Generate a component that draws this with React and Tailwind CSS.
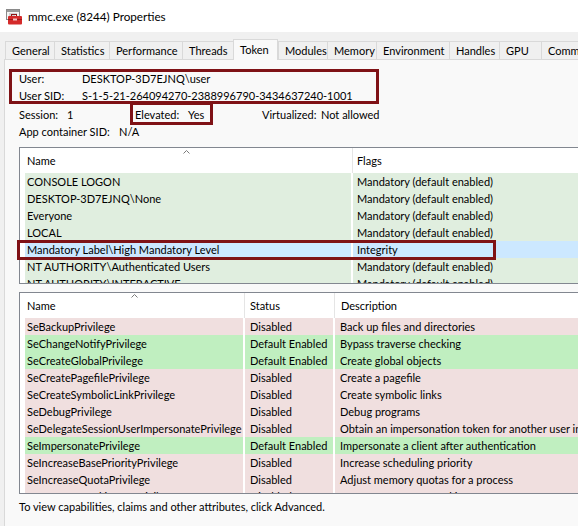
import React from "react";

const FONT = { fontFamily: "Lato, 'Liberation Sans', sans-serif" };

const tabs = [
  ["General", 49],
  ["Statistics", 55],
  ["Performance", 73],
  ["Threads", 51],
  ["Token", 44],
  ["Modules", 49],
  ["Memory", 49],
  ["Environment", 73],
  ["Handles", 50],
  ["GPU", 42],
  ["Comments", 70],
];

const groups = [
  ["CONSOLE LOGON", "Mandatory (default enabled)"],
  ["DESKTOP-3D7EJNQ\\None", "Mandatory (default enabled)"],
  ["Everyone", "Mandatory (default enabled)"],
  ["LOCAL", "Mandatory (default enabled)"],
  ["Mandatory Label\\High Mandatory Level", "Integrity", true],
  ["NT AUTHORITY\\Authenticated Users", "Mandatory (default enabled)"],
  ["NT AUTHORITY\\INTERACTIVE", "Mandatory (default enabled)"],
];

const privs = [
  ["SeBackupPrivilege", "Disabled", "Back up files and directories"],
  ["SeChangeNotifyPrivilege", "Default Enabled", "Bypass traverse checking"],
  ["SeCreateGlobalPrivilege", "Default Enabled", "Create global objects"],
  ["SeCreatePagefilePrivilege", "Disabled", "Create a pagefile"],
  ["SeCreateSymbolicLinkPrivilege", "Disabled", "Create symbolic links"],
  ["SeDebugPrivilege", "Disabled", "Debug programs"],
  ["SeDelegateSessionUserImpersonatePrivilege", "Disabled", "Obtain an impersonation token for another user in the same session"],
  ["SeImpersonatePrivilege", "Default Enabled", "Impersonate a client after authentication"],
  ["SeIncreaseBasePriorityPrivilege", "Disabled", "Increase scheduling priority"],
  ["SeIncreaseQuotaPrivilege", "Disabled", "Adjust memory quotas for a process"],
  ["SeIncreaseWorkingSetPrivilege", "Disabled", "Increase a process working set"],
];

function Caret({ className }) {
  return (
    <svg width="7" height="4" viewBox="0 0 7 4" className={className}>
      <path d="M0.5 3.5 L3.5 0.5 L6.5 3.5" fill="none" stroke="#7a7a7a" strokeWidth="1" />
    </svg>
  );
}

function AppIcon() {
  return (
    <svg width="17" height="16" viewBox="0 0 17 16">
      <rect x="0.5" y="0.5" width="13" height="10" fill="#f4f4f4" stroke="#8a8a8a" />
      <rect x="1" y="1" width="12" height="2" fill="#9a9a9a" />
      <line x1="3" y1="5" x2="11" y2="5" stroke="#b0b0b0" />
      <line x1="3" y1="7" x2="9" y2="7" stroke="#b0b0b0" />
      <rect x="5.5" y="5.5" width="5" height="3" fill="none" stroke="#8e1515" />
      <rect x="2" y="7" width="14" height="8.5" rx="1" fill="#d42a2a" />
      <rect x="2" y="10" width="14" height="1" fill="#a01818" />
      <rect x="7" y="9.5" width="4" height="2" fill="#f2c2c2" />
    </svg>
  );
}

export default function App() {
  return (
    <div className="w-[578px] h-[526px] overflow-hidden bg-[#f0f0f0] text-[11px] text-black" style={FONT}>
      {/* Title bar */}
      <div className="h-[32px] bg-white flex items-center pl-[6px] gap-[5px]">
        <div className="mt-[1px]"><AppIcon /></div>
        <span className="text-[11.7px] leading-[17px] pt-px">mmc.exe (8244) Properties</span>
      </div>

      {/* Tabs */}
      <div className="pl-[5px] pt-[7px] flex items-end h-[27px] relative z-10">
        {tabs.map(([t, w]) =>
          t === "Token" ? (
            <div
              key={t}
              className="h-[21px] -mb-px bg-[#f9f9f9] border border-b-0 border-[#d9d9d9] pl-[6px] leading-[17px] pt-[1px] shrink-0"
              style={{ width: w + 1 }}
            >
              {t}
            </div>
          ) : (
            <div
              key={t}
              className="h-[18px] bg-[#f0f0f0] border-t border-l border-[#d9d9d9] pl-[6px] leading-[17px] shrink-0 last:border-r whitespace-nowrap overflow-hidden"
              style={{ width: w }}
            >
              {t}
            </div>
          )
        )}
      </div>

      {/* Panel */}
      <div className="ml-[4px] bg-[#f9f9f9] border-l border-t border-[#d9d9d9] h-[480px] relative pl-[14px] pt-[10px]">
        {/* Info */}
        <div className="leading-[17px]">
          <div className="flex">
            <span className="w-[63px]">User:</span>
            <span>DESKTOP-3D7EJNQ\user</span>
          </div>
          <div className="flex">
            <span className="w-[63px]">User SID:</span>
            <span className="whitespace-nowrap">S-1-5-21-264094270-2388996790-3434637240-1001</span>
          </div>
          <div className="flex mt-[2px]">
            <div className="w-[116px] flex">
              <span className="w-[48px]">Session:</span>
              <span>1</span>
            </div>
            <div className="w-[127px] flex">
              <span className="w-[53px]">Elevated:</span>
              <span>Yes</span>
            </div>
            <div className="flex">
              <span className="w-[59px]">Virtualized:</span>
              <span>Not allowed</span>
            </div>
          </div>
          <div className="flex">
            <span className="w-[100px]">App container SID:</span>
            <span>N/A</span>
          </div>
        </div>

        {/* Groups list */}
        <div className="mt-[7px] w-[600px] h-[137px] border border-[#828790] bg-white overflow-hidden">
          <div className="h-[25px] flex pl-[5px] bg-white">
            <div className="w-[326px] shrink-0 relative pl-[2px] pt-[4px] leading-[17px]">
              Name
              <Caret className="absolute top-[2px] left-[158px]" />
            </div>
            <div className="w-[2px] shrink-0 flex justify-center"><div className="w-px h-full bg-[#e5e5e5]" /></div>
            <div className="pl-[4px] pt-[4px] leading-[17px]">Flags</div>
          </div>
          {groups.map(([n, f, sel]) => (
            <div key={n} className="h-[17px] flex pl-[5px] gap-[2px] leading-[17px]">
              <div className={`w-[326px] shrink-0 pl-[2px] whitespace-nowrap ${sel ? "bg-[#cce8ff]" : "bg-[#e0eedf]"}`}>{n}</div>
              <div className={`flex-1 min-w-0 pl-[4px] whitespace-nowrap overflow-hidden ${sel ? "bg-[#cce8ff]" : "bg-[#e0eedf]"}`}>{f}</div>
            </div>
          ))}
        </div>

        {/* Privileges list */}
        <div className="mt-[8px] w-[600px] h-[202px] border border-[#828790] bg-white overflow-hidden">
          <div className="h-[25px] flex pl-[5px] bg-white">
            <div className="w-[218px] shrink-0 relative pl-[2px] pt-[4px] leading-[17px]">
              Name
              <Caret className="absolute top-[1px] left-[106px]" />
            </div>
            <div className="w-[2px] shrink-0 flex justify-center"><div className="w-px h-full bg-[#e5e5e5]" /></div>
            <div className="w-[88px] shrink-0 pl-[5px] pt-[4px] leading-[17px]">Status</div>
            <div className="w-[2px] shrink-0 flex justify-center"><div className="w-px h-full bg-[#e5e5e5]" /></div>
            <div className="pl-[6px] pt-[4px] leading-[17px]">Description</div>
          </div>
          {privs.map(([n, s, d]) => {
            const bg = s === "Disabled" ? "bg-[#f0dfdf]" : "bg-[#c0efc0]";
            return (
              <div key={n} className="h-[17px] flex pl-[5px] gap-[2px] leading-[17px]">
                <div className={`w-[218px] shrink-0 pl-[2px] whitespace-nowrap overflow-hidden ${bg}`}>{n}</div>
                <div className={`w-[88px] shrink-0 pl-[5px] whitespace-nowrap ${bg}`}>{s}</div>
                <div className={`flex-1 min-w-0 pl-[5px] whitespace-nowrap overflow-hidden ${bg}`}>{d}</div>
              </div>
            );
          })}
        </div>

        <div className="mt-[4px] leading-[17px]">To view capabilities, claims and other attributes, click Advanced.</div>

        {/* Annotation boxes */}
        <div className="absolute left-[4px] top-[9px] w-[370px] h-[35px] border-[3px] border-[#7f1216]" />
        <div className="absolute left-[125px] top-[42px] w-[83px] h-[23px] border-[3px] border-[#7f1216]" />
        <div className="absolute left-[12px] top-[180px] w-[479px] h-[20px] border-[3px] border-[#7f1216]" />
      </div>
    </div>
  );
}
